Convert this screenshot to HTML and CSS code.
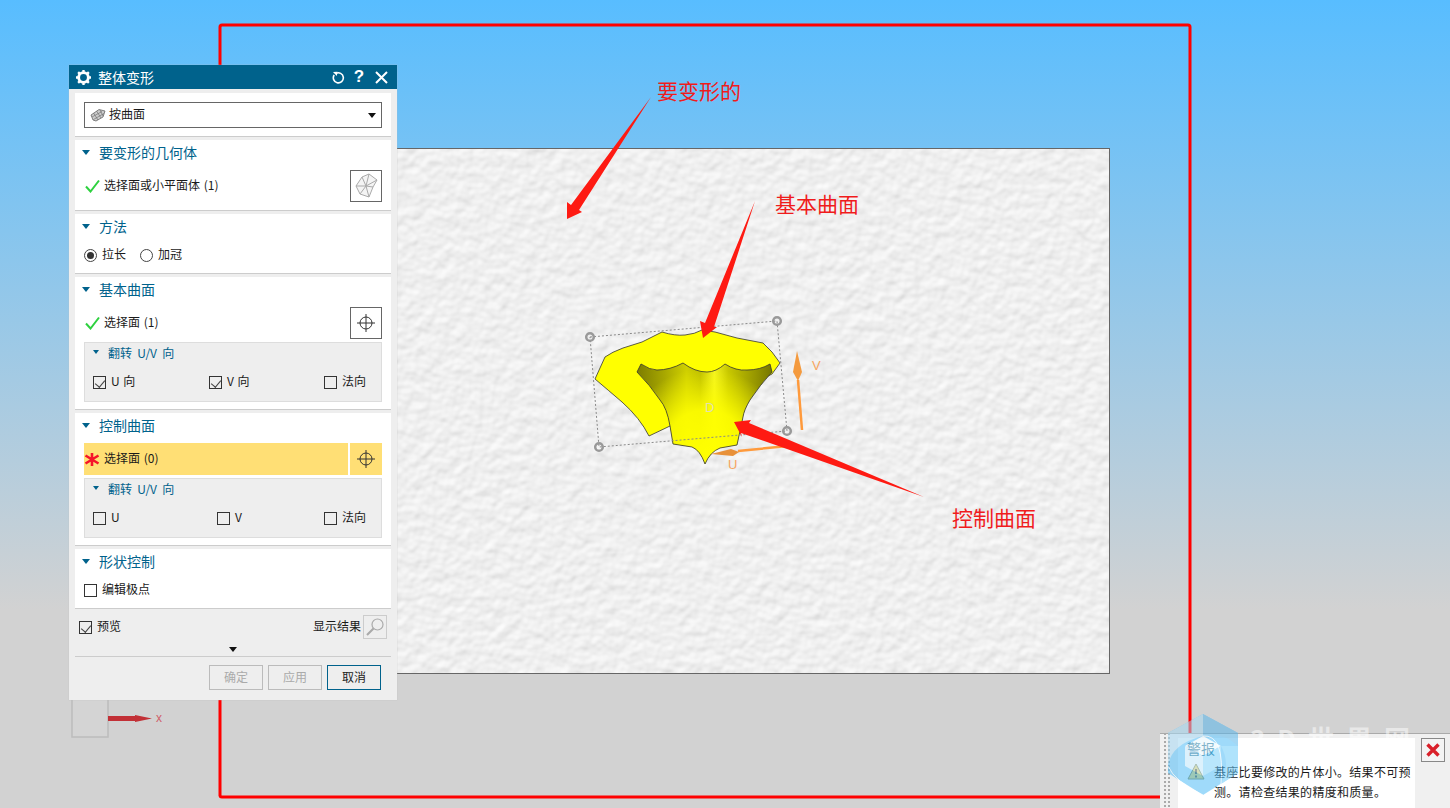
FILE: index.html
```html
<!DOCTYPE html>
<html lang="zh-CN">
<head>
	<meta charset="UTF-8" />
	<title>整体变形</title>
	<link rel="stylesheet" href="styles.css">
</head>
<body>
	<!-- 图形窗口 -->
	<svg class="scene" width="1450" height="808" viewBox="0 0 1450 808">
		<defs>
			<filter id="emboss" x="0" y="0" width="100%" height="100%">
				<feTurbulence type="fractalNoise" baseFrequency="0.085" numOctaves="2" seed="11" result="n"/>
				<feDiffuseLighting in="n" surfaceScale="1.05" diffuseConstant="1.02" lighting-color="#ffffff">
					<feDistantLight azimuth="250" elevation="58"/>
				</feDiffuseLighting>
			</filter>
			<linearGradient id="funnel" x1="637" y1="0" x2="775" y2="0" gradientUnits="userSpaceOnUse">
				<stop offset="0" stop-color="#7c7c00"/>
				<stop offset="0.2" stop-color="#a8a800"/>
				<stop offset="0.36" stop-color="#d0d000"/>
				<stop offset="0.46" stop-color="#bcbc00"/>
				<stop offset="0.56" stop-color="#f4f420"/>
				<stop offset="0.66" stop-color="#c8c800"/>
				<stop offset="0.86" stop-color="#969600"/>
				<stop offset="1" stop-color="#707000"/>
			</linearGradient>
			<radialGradient id="funnelfade" cx="706" cy="452" r="84" gradientUnits="userSpaceOnUse">
				<stop offset="0" stop-color="#ffff00"/>
				<stop offset="0.5" stop-color="#ffff00" stop-opacity="0.9"/>
				<stop offset="1" stop-color="#ffff00" stop-opacity="0"/>
			</radialGradient>
		</defs>

		<rect x="300" y="148" width="810" height="526" filter="url(#emboss)"/>
		<rect x="300.5" y="148.5" width="809" height="525" fill="none" stroke="#666"/>

		<!-- 红色大框 -->
		<path d="M220 796V27q0-2 2-2H1188q2 0 2 2V795q0 2-2 2H222q-2 0-2-2" fill="none" stroke="#f00" stroke-width="3"/>

		<!-- 曲面 -->
		<path d="M595 379L605 357Q612 352 623 348L642 342L662 332Q675 336 685 335Q695 334 702 330L715 332L737 338L763 343L772 352L780 363L772 374L670 426L649 436Q640 418 622 402Q608 390 595 379Z" fill="#ff0" stroke="#333" stroke-width="0.8"/>
		<path d="M637 372L641 364Q650 370 657 370Q670 370 683 363Q695 372 707 372Q716 372 725 364Q736 371 747 370Q760 370 770 364L772 372Q760 385 750 400Q744 410 743 417L737 445L720 448Q710 452 705 464Q700 450 692 447L673 444L670 426Q667 408 660 400Q650 385 637 372Z" fill="url(#funnel)"/>
		<path d="M637 372L641 364Q650 370 657 370Q670 370 683 363Q695 372 707 372Q716 372 725 364Q736 371 747 370Q760 370 770 364L772 372Q760 385 750 400Q744 410 743 417L737 445L720 448Q710 452 705 464Q700 450 692 447L673 444L670 426Q667 408 660 400Q650 385 637 372Z" fill="url(#funnelfade)" stroke="#333" stroke-width="0.8"/>

		<!-- 选择框和手柄 -->
		<path d="M590 337L777 321L787 431L599 447Z" fill="none" stroke="#8a8a8a" stroke-dasharray="2 2"/>
		<g fill="none" stroke="#999" stroke-width="2.5">
			<circle cx="590" cy="337" r="3.8"/>
			<circle cx="777" cy="321" r="3.8"/>
			<circle cx="787" cy="431" r="3.8"/>
			<circle cx="599" cy="447" r="3.8"/>
		</g>

		<!-- UV 方向 -->
		<path d="M802 430L798 380" stroke="#ff9a3c" stroke-width="2.5"/>
		<path d="M797 351L802 372L798 381L793 372Z" fill="#f49a3e"/>
		<path d="M788 446L738 451" stroke="#ff9a3c" stroke-width="2.5"/>
		<path d="M711 454L731 449L739 452L733 456Z" fill="#e8913a"/>
		<text class="axis" x="812" y="370">V</text>
		<text class="axis" x="728" y="469">U</text>
		<text class="axis axis-d" x="705" y="412">D</text>

		<!-- 标注箭头 -->
		<g fill="#fe1a12">
			<path d="M651 97L579 210L582 212L567 219L567 202L571 205Z"/>
			<path d="M755 201L714 327L717 327L703 338L700 321L705 323Z"/>
			<path d="M924 497L749 423L751 420L734 422L742 437L741 433Z"/>
		</g>

		<!-- 坐标系 -->
		<rect x="72" y="695" width="36" height="42" fill="#d4d4d4" stroke="#bcbcbc" stroke-width="1.5"/>
		<path d="M108 716H135V715L152 718.500L135 722V721H108Z" fill="#c23036"/>
		<text class="axis axis-x" x="156" y="722">x</text>
	</svg>

	<div class="note note-a">要变形的</div>
	<div class="note note-b">基本曲面</div>
	<div class="note note-c">控制曲面</div>

	<!-- 对话框 -->
	<div class="dialog">
		<div class="title">
			<svg class="title-gear" width="15" height="15" viewBox="0 0 14 14"><path d="M7 2.500A4.500 4.500 0 1 1 7 11.500A4.500 4.500 0 1 1 7 2.500Z" fill="none" stroke="#fff" stroke-width="2.600"/><path d="M7 0V2.500M7 11.500V14M0 7H2.500M11.500 7H14M2 2L3.800 3.800M10.200 10.200L12 12M12 2L10.200 3.800M3.800 10.200L2 12" stroke="#fff" stroke-width="2.200"/></svg>
			<span class="title-text">整体变形</span>
			<svg class="title-btn" width="13" height="13" viewBox="0 0 13 13"><path d="M4 2.400A5 5 0 1 1 2.200 4" fill="none" stroke="#fff" stroke-width="1.600"/><path d="M1 1L5.500 0.800L4.800 5Z" fill="#fff"/></svg>
			<span class="title-help">?</span>
			<svg class="title-btn title-close" width="13" height="13" viewBox="0 0 13 13"><path d="M1 1L12 12M12 1L1 12" stroke="#fff" stroke-width="2"/></svg>
		</div>
		<div class="body">
			<div class="sect sect-type">
				<div class="select">
					<svg width="16" height="14" viewBox="0 0 16 14"><path d="M1 7L9 1.500L15 3L13 9L6 13L3 12Z" fill="#ccc" stroke="#666" stroke-width="0.800"/><path d="M3.500 5L8 12M6.500 3L11 10M10 2L13 8M2 9L12 3.500M3.500 11.500L14 5.500" stroke="#666" stroke-width="0.600"/></svg>
					<span class="select-text">按曲面</span>
					<i class="tri-black"></i>
				</div>
			</div>

			<div class="sect sect-geo">
				<div class="sect-head"><i class="tri"></i>要变形的几何体</div>
				<div class="pick">
					<svg class="tick" width="15" height="14" viewBox="0 0 15 14"><path d="M1 7.500L5.500 12.500L14 1.500" fill="none" stroke="#2ed13f" stroke-width="2"/></svg>
					<span class="pick-text">选择面或小平面体 (1)</span>
					<span class="pick-btn">
						<svg width="24" height="26" viewBox="0 0 24 26"><path d="M2 13L8 4L15 1L23 7L19 14L15 24L6 21Z" fill="#f4f4f4" stroke="#aaa"/><path d="M8 4L12 13L2 13M12 13L23 7M12 13L15 24M12 13L6 21M15 1L12 13M12 13L19 14" fill="none" stroke="#aaa"/></svg>
					</span>
				</div>
			</div>

			<div class="sect sect-method">
				<div class="sect-head"><i class="tri"></i>方法</div>
				<div class="radios">
					<span class="radio radio-on"></span><span class="radio-text">拉长</span>
					<span class="radio"></span><span class="radio-text">加冠</span>
				</div>
			</div>

			<div class="sect sect-surf">
				<div class="sect-head"><i class="tri"></i>基本曲面</div>
				<div class="pick">
					<svg class="tick" width="15" height="14" viewBox="0 0 15 14"><path d="M1 7.500L5.500 12.500L14 1.500" fill="none" stroke="#2ed13f" stroke-width="2"/></svg>
					<span class="pick-text">选择面 (1)</span>
					<span class="pick-btn">
						<svg width="18" height="18" viewBox="0 0 18 18"><circle cx="9" cy="9" r="6" fill="none" stroke="#333"/><path d="M9 0V18M0 9H18" stroke="#333"/></svg>
					</span>
				</div>
				<div class="group">
					<div class="group-head"><i class="tri tri-small"></i>翻转 U/V 向</div>
					<div class="checks">
						<label class="check check-w1"><span class="box box-on"></span>U 向</label>
						<label class="check check-w2"><span class="box box-on"></span>V 向</label>
						<label class="check"><span class="box"></span>法向</label>
					</div>
				</div>
			</div>

			<div class="sect sect-surf">
				<div class="sect-head"><i class="tri"></i>控制曲面</div>
				<div class="pick pick-active">
					<span class="pick-main">
						<svg class="tick tick-star" width="16" height="15" viewBox="0 0 16 15"><path d="M8 1V14M1.500 3.500L14.500 11.500M14.500 3.500L1.500 11.500" stroke="#f5142a" stroke-width="2.600"/></svg>
						<span class="pick-text">选择面 (0)</span>
					</span>
					<span class="pick-btn">
						<svg width="18" height="18" viewBox="0 0 18 18"><circle cx="9" cy="9" r="6" fill="none" stroke="#333"/><path d="M9 0V18M0 9H18" stroke="#333"/></svg>
					</span>
				</div>
				<div class="group">
					<div class="group-head"><i class="tri tri-small"></i>翻转 U/V 向</div>
					<div class="checks">
						<label class="check check-w3"><span class="box"></span>U</label>
						<label class="check check-w4"><span class="box"></span>V</label>
						<label class="check"><span class="box"></span>法向</label>
					</div>
				</div>
			</div>

			<div class="sect sect-shape">
				<div class="sect-head"><i class="tri"></i>形状控制</div>
				<label class="check check-poles"><span class="box"></span>编辑极点</label>
			</div>

			<div class="preview">
				<label class="check"><span class="box box-on"></span>预览</label>
				<span class="preview-text">显示结果</span>
				<span class="preview-btn">
					<svg width="20" height="20" viewBox="0 0 20 20"><circle cx="12.500" cy="7.500" r="5.500" fill="none" stroke="#aaa" stroke-width="1.200"/><path d="M8.500 11.500L2 18" stroke="#aaa" stroke-width="2.200"/></svg>
				</span>
			</div>
			<div class="more"><i class="tri-black"></i></div>
			<div class="actions">
				<span class="btn btn-off">确定</span>
				<span class="btn btn-off">应用</span>
				<span class="btn btn-main">取消</span>
			</div>
		</div>
	</div>

	<!-- 警报 -->
	<div class="alert">
		<div class="alert-grip"></div>
		<div class="alert-main">
			<div class="alert-title">警报</div>
			<div class="alert-row">
				<svg width="18" height="17" viewBox="0 0 18 17"><path d="M9 1L17 16H1Z" fill="#f5d76a" stroke="#8a8a5a"/><path d="M9 6V11M9 12.500V14.500" stroke="#333" stroke-width="1.500"/></svg>
				<p class="alert-text">基座比要修改的片体小。结果不可预测。请检查结果的精度和质量。</p>
			</div>
		</div>
		<div class="alert-side">
			<span class="alert-close">
				<svg width="16" height="16" viewBox="0 0 16 16"><path d="M2.500 2.500L13.500 13.500M13.500 2.500L2.500 13.500" stroke="#d9202a" stroke-width="3.400"/></svg>
			</span>
		</div>
	</div>

	<!-- 水印 -->
	<svg class="mark" width="72" height="82" viewBox="0 0 72 82">
		<path d="M36 0L71 19V59L36 81L1 59V19Z" fill="#52bdf7"/>
		<path d="M36 0L1 19V52Q4 30 36 22Z" fill="#a6d8f2"/>
		<path d="M36 0L71 19V32Q56 18 36 22Z" fill="#5ab6ea"/>
		<path d="M71 32V59L54 70Q64 50 54 32Z" fill="#6fcdfb"/>
		<path d="M36 22L54 32L36 42L18 32Z" fill="#e8f6fd"/>
		<path d="M18 32L36 42V62L18 52Z" fill="#c0e6fa"/>
		<path d="M36 42L54 32V52L36 62Z" fill="#80d2fb"/>
		<path d="M1 52Q8 68 36 81M36 22Q58 20 54 70" fill="none" stroke="#fff" stroke-width="0.800"/>
	</svg>
	<div class="mark-text">3D世界网</div>
</body>
</html>
```

FILE: styles.css
```css
*{
	margin:0;
	padding:0;
	box-sizing:border-box;
}
html,body{
	width:1450px;
	height:808px;
	overflow:hidden;
}
body{
	position:relative;
	background:linear-gradient(#58bdff 0,#d2d2d2 610px);
	font-family:"Noto Sans CJK SC","Liberation Sans",sans-serif;
	font-size:12px;
	color:#1a1a1a;
}
i{
	display:block;
}

/* 图形窗口 */
.scene{
	position:absolute;
	top:0;
	left:0;
}
.axis{
	font-family:"Liberation Sans",sans-serif;
	font-size:13px;
	fill:#f7a560;
}
.axis-d{
	fill:#e0e0b0;
}
.axis-x{
	fill:#d0606a;
	font-size:12px;
}
.note{
	position:absolute;
	font-size:21px;
	line-height:28px;
	color:#f01c1c;
}
.note-a{
	top:76px;
	left:657px;
}
.note-b{
	top:189px;
	left:775px;
}
.note-c{
	top:503px;
	left:952px;
}

/* 对话框 */
.dialog{
	position:absolute;
	top:65px;
	left:69px;
	width:328px;
	height:635px;
	background:#eee;
	box-shadow:0 0 1px #bbb;
}
.title{
	display:flex;
	align-items:center;
	height:24px;
	padding:0 9px 0 7px;
	background:#00628c;
	color:#fff;
}
.title-text{
	flex:1;
	margin-left:7px;
	font-size:14px;
	line-height:24px;
}
.title-help{
	width:14px;
	margin:0 9px 0 7px;
	font:bold 17px "Liberation Sans",sans-serif;
	text-align:center;
}
.body{
	padding:4px 6px 0;
}
.sect{
	margin-bottom:3px;
	padding:0 9px;
	background:#fff;
	border-bottom:1px solid #ccc;
}
.sect-type{
	height:44px;
	padding-top:9px;
}
.sect-geo{
	height:71px;
}
.sect-method{
	height:60px;
}
.sect-surf{
	height:133px;
}
.sect-shape{
	height:60px;
}
.sect-head{
	display:flex;
	align-items:center;
	height:26px;
	margin-left:-2px;
	padding-bottom:2px;
	font-size:14px;
	color:#00628c;
}
.tri{
	width:0;
	height:0;
	margin-right:9px;
	border-style:solid;
	border-width:5px 4px 0;
	border-color:#00628c transparent transparent;
}
.tri-small{
	margin-right:9px;
	border-width:4px 3.500px 0;
}
.tri-black{
	width:0;
	height:0;
	border-style:solid;
	border-width:5px 4px 0;
	border-color:#111 transparent transparent;
}
.select{
	display:flex;
	align-items:center;
	height:26px;
	padding:0 5px 0 5px;
	border:1px solid #666;
}
.select-text{
	flex:1;
	margin-left:3px;
	padding-bottom:3px;
}
.pick{
	display:flex;
	align-items:center;
	height:32px;
	margin-top:4px;
}
.tick{
	flex:none;
	margin:0 4px 0 1px;
}
.tick-star{
	margin:0 4px 0 0;
}
.pick-text{
	flex:1;
	padding-bottom:3px;
	word-spacing:1px;
}
.pick-btn{
	display:flex;
	align-items:center;
	justify-content:center;
	width:32px;
	height:32px;
	border:1px solid #666;
}
.pick-active{
	gap:2px;
}
.pick-main{
	display:flex;
	flex:1;
	align-items:center;
	height:32px;
	background:#ffdf75;
}
.pick-active .pick-btn{
	border:0;
	background:#ffdf75;
}
.radios{
	display:flex;
	align-items:center;
	height:28px;
	margin-top:1px;
}
.radio{
	position:relative;
	width:13px;
	height:13px;
	border:1px solid #444;
	border-radius:50%;
}
.radio-on:after{
	content:"";
	position:absolute;
	top:2px;
	left:2px;
	width:7px;
	height:7px;
	border-radius:50%;
	background:#333;
}
.radio-text{
	margin:0 14px 0 5px;
	padding-bottom:3px;
}
.group{
	height:60px;
	margin-top:3px;
	padding:0 8px;
	background:#eee;
	border:1px solid #ddd;
}
.group-head{
	display:flex;
	align-items:center;
	height:22px;
	padding-bottom:4px;
	word-spacing:2.500px;
	color:#00628c;
}
.checks{
	display:flex;
	align-items:center;
	height:30px;
	padding-top:4px;
}
.check{
	display:flex;
	align-items:center;
	padding-bottom:3px;
	word-spacing:1px;
}
.check-w1{
	width:116px;
}
.check-w2{
	width:115px;
}
.check-w3{
	width:124px;
}
.check-w4{
	width:107px;
}
.box{
	flex:none;
	position:relative;
	width:13px;
	height:13px;
	margin:3px 5px 0 0;
	border:1px solid #333;
}
.box-on:after{
	content:"";
	position:absolute;
	top:1px;
	left:3px;
	width:5px;
	height:8px;
	border:solid #444;
	border-width:0 1.300px 1.300px 0;
	transform:rotate(40deg);
}
.check-poles{
	height:30px;
}
.preview{
	display:flex;
	align-items:center;
	height:30px;
	padding:0 4px;
}
.preview .check{
	flex:1;
}
.preview-text{
	margin-right:2px;
	padding-bottom:3px;
}
.preview-btn{
	display:flex;
	align-items:center;
	justify-content:center;
	width:24px;
	height:24px;
	border:1px solid #ccc;
}
.more{
	display:flex;
	justify-content:center;
	align-items:center;
	height:15px;
	border-bottom:1px solid #ccc;
}
.actions{
	display:flex;
	justify-content:flex-end;
	gap:5px;
	padding:8px 10px 0 0;
}
.btn{
	width:54px;
	height:25px;
	line-height:21px;
	text-align:center;
	border:1px solid #bbb;
}
.btn-off{
	color:#aaa;
}
.btn-main{
	border-color:#00628c;
	color:#222;
}

/* 警报窗口 */
.alert{
	position:absolute;
	top:733px;
	left:1160px;
	display:flex;
	width:290px;
	height:75px;
	background:#f0f0f0;
	border-top:1px solid #aaa;
}
.alert-grip{
	width:18px;
	padding:0 7px 0 3px;
	background:radial-gradient(circle,#aaa 1px,transparent 1.200px) 3px 2px/4px 4px;
	background-clip:content-box;
}
.alert-main{
	width:237px;
	margin-top:4px;
	padding:0 0 0 9px;
	background:#fff;
}
.alert-title{
	font-size:14px;
	line-height:20px;
	color:#00628c;
}
.alert-row{
	display:flex;
	gap:9px;
	margin-top:4px;
}
.alert-row svg{
	flex:none;
	margin-top:1px;
}
.alert-text{
	width:200px;
	letter-spacing:.3px;
	line-height:20px;
}
.alert-side{
	padding:4px 0 0 6px;
}
.alert-close{
	display:flex;
	align-items:center;
	justify-content:center;
	width:24px;
	height:24px;
	background:#f4f4f4;
	border:1px solid #888;
}

/* 水印 */
.mark{
	position:absolute;
	top:714px;
	left:1167px;
	opacity:.55;
}
.mark-text{
	position:absolute;
	top:725px;
	left:1250px;
	font-size:26px;
	font-weight:bold;
	line-height:26px;
	letter-spacing:12px;
	color:rgba(255,255,255,.5);
}
```
